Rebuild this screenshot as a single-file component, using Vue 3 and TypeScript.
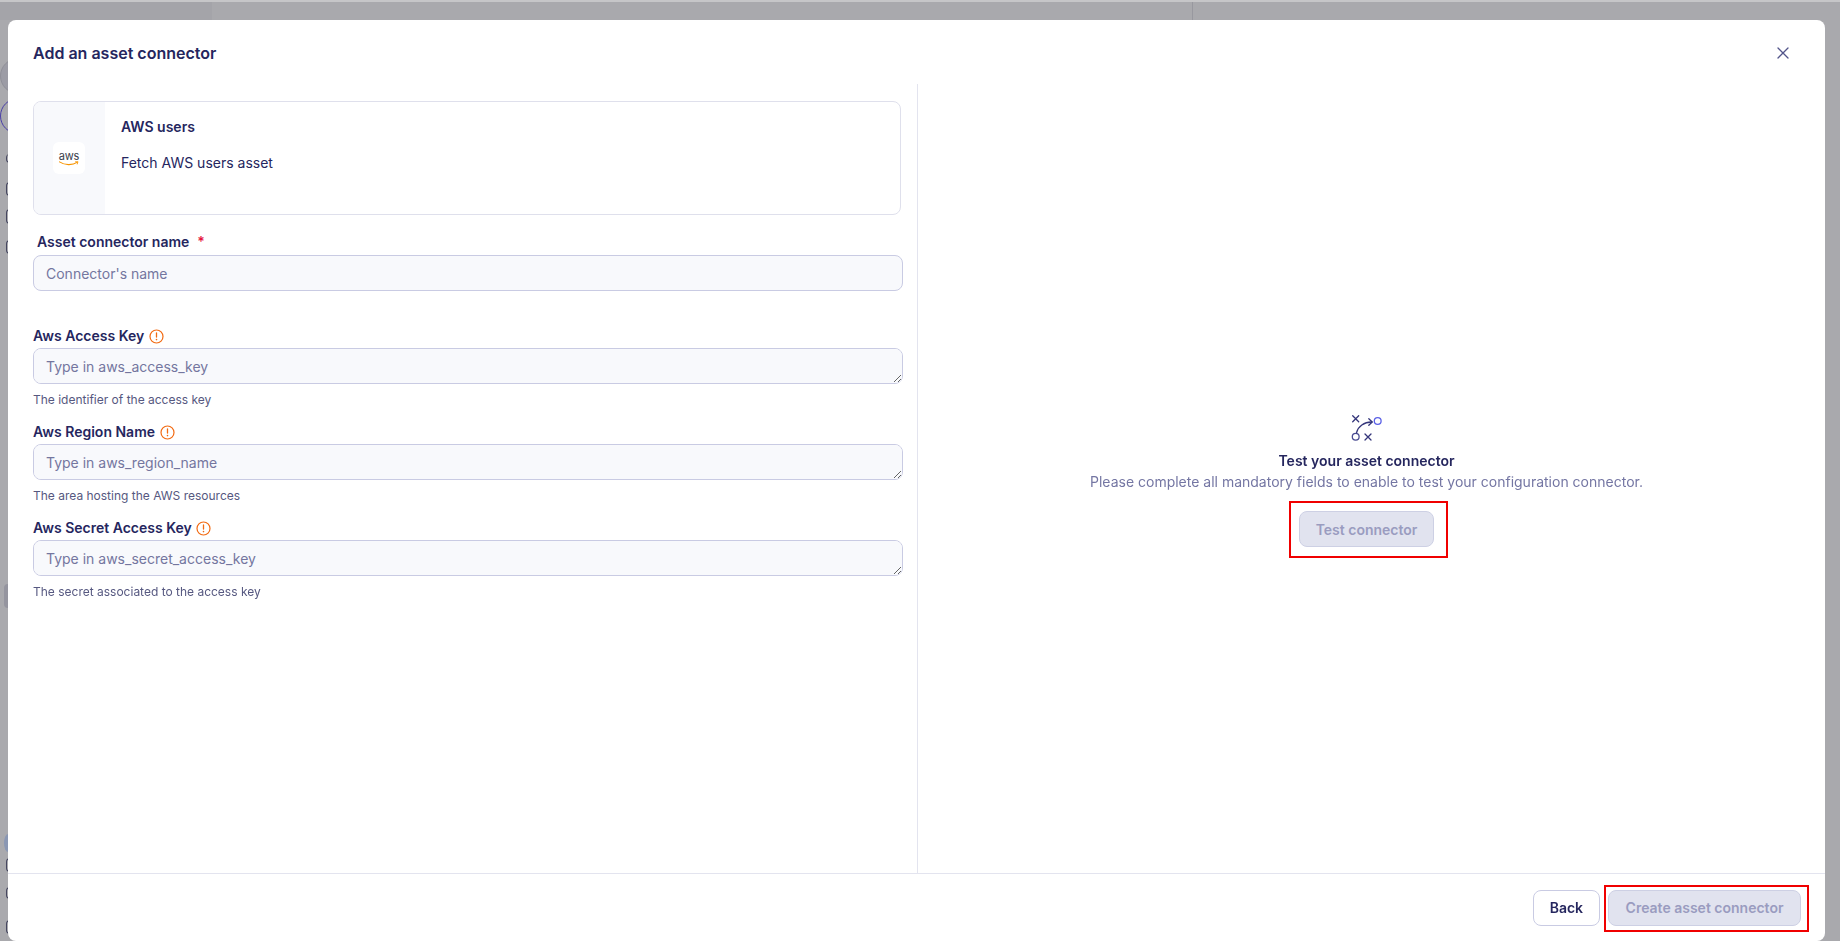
<script setup lang="ts">
interface Field {
  label: string
  placeholder: string
  help: string
}

const fields: Field[] = [
  { label: 'Aws Access Key', placeholder: 'Type in aws_access_key', help: 'The identifier of the access key' },
  { label: 'Aws Region Name', placeholder: 'Type in aws_region_name', help: 'The area hosting the AWS resources' },
  { label: 'Aws Secret Access Key', placeholder: 'Type in aws_secret_access_key', help: 'The secret associated to the access key' },
]
</script>

<template>
  <div class="page">
    <div class="backdrop" aria-hidden="true">
      <span class="bg-top-left"></span>
      <span class="bg-line"></span>
      <span class="bg-circle grey"></span>
      <span class="bg-circle purple"></span>
      <span class="bg-glyph g1"></span>
      <span class="bg-glyph g2"></span>
      <span class="bg-glyph g3"></span>
      <span class="bg-glyph g4"></span>
      <span class="bg-pill"></span>
      <span class="bg-dot"></span>
      <span class="bg-glyph g5"></span>
      <span class="bg-glyph g6"></span>
      <span class="bg-glyph g7"></span>
    </div>

    <section class="modal">
      <header class="modal-head">
        <h2 class="modal-title">Add an asset connector</h2>
        <button class="close" type="button" aria-label="Close">
          <svg width="12" height="12" viewBox="0 0 12 12" fill="none">
            <path d="M1 1l10 10M11 1L1 11" stroke="#53558a" stroke-width="1.3" stroke-linecap="round" />
          </svg>
        </button>
      </header>

      <div class="modal-body">
        <div class="form-col">
          <div class="card">
            <div class="card-logo">
              <div class="logo-box">
                <span class="aws-text">aws</span>
                <svg class="aws-smile" width="20" height="5" viewBox="0 0 21 5" fill="none">
                  <path d="M.5 .8C6 4.4 14 4.6 19 1.3" stroke="#f79400" stroke-width="1.2" stroke-linecap="round" />
                  <path d="M17.3 .7l2.6-.1-.7 2.4" stroke="#f79400" stroke-width=".9" stroke-linecap="round" />
                </svg>
              </div>
            </div>
            <div class="card-text">
              <div class="card-name">AWS users</div>
              <div class="card-desc">Fetch AWS users asset</div>
            </div>
          </div>

          <label class="name-label">Asset connector name<span class="req">*</span></label>
          <input class="input" type="text" placeholder="Connector's name" />

          <div class="fields">
            <div v-for="field in fields" :key="field.label" class="field">
              <div class="field-label">
                <span>{{ field.label }}</span>
                <svg width="15" height="15" viewBox="0 0 15 15" fill="none">
                  <circle cx="7.5" cy="7.5" r="6.5" stroke="#f26a12" stroke-width="1.2" />
                  <path d="M7.5 4v4" stroke="#f26a12" stroke-width="1.3" stroke-linecap="round" />
                  <circle cx="7.5" cy="10.6" r=".8" fill="#f26a12" />
                </svg>
              </div>
              <textarea class="input area" :placeholder="field.placeholder"></textarea>
              <div class="help">{{ field.help }}</div>
            </div>
          </div>
        </div>

        <div class="test-col">
          <svg class="test-icon" width="36" height="36" viewBox="0 0 36 36" fill="none">
            <path d="M4.7 5.7l6 6M10.7 5.7l-6 6M17 24l6 6M23 24l-6 6" stroke="#34357a" stroke-width="1.3" stroke-linecap="round" />
            <circle cx="7.7" cy="26.7" r="3.4" stroke="#4a4c92" stroke-width="1.3" />
            <circle cx="29.7" cy="11" r="3.4" stroke="#5a60e6" stroke-width="1.3" />
            <path d="M8.6 22.5C10 16.5 16 11.8 24 12" stroke="#34357a" stroke-width="1.3" stroke-linecap="round" />
            <path d="M20.8 8.8L24.2 12l-3.4 3.2" stroke="#34357a" stroke-width="1.3" stroke-linecap="round" stroke-linejoin="round" />
          </svg>
          <div class="test-title">Test your asset connector</div>
          <div class="test-sub">Please complete all mandatory fields to enable to test your configuration connector.</div>
          <div class="marked">
            <button class="btn disabled" type="button" disabled>Test connector</button>
            <span class="mark mark-test"></span>
          </div>
        </div>
      </div>

      <footer class="modal-foot">
        <button class="btn" type="button">Back</button>
        <div class="marked">
          <button class="btn disabled wide" type="button" disabled>Create asset connector</button>
          <span class="mark mark-create"></span>
        </div>
      </footer>
    </section>
  </div>
</template>

<style>
html, body { margin: 0; background: #a9a9ad; }
</style>

<style scoped>
* { box-sizing: border-box; }

.page {
  position: relative;
  width: 1840px;
  height: 941px;
  padding: 20px 15px 0 8px;
  overflow: hidden;
  background: #a9a9ad;
  font-family: Inter, "Liberation Sans", sans-serif;
  color: #25265e;
}

.backdrop { position: absolute; inset: 0; border-top: 2px solid #c6c6c8; }
.backdrop span { position: absolute; display: block; }
.bg-top-left { left: 0; top: 0; width: 212px; height: 18px; background: #a4a4a9; }
.bg-line { left: 1192px; top: 0; width: 1px; height: 18px; background: #98989f; }
.bg-circle { left: 0; width: 36px; height: 36px; border-radius: 50%; }
.bg-circle.grey { top: 56px; border: 1px solid #8f8f98; background: #9c9ca5; }
.bg-circle.purple { top: 96px; border: 1px solid #4a3fa8; }
.bg-glyph { width: 4px; border: 1.5px solid #45465f; border-right: 0; border-radius: 4px 0 0 4px; left: 6px; }
.g1 { top: 152px; height: 9px; border-width: 0 0 1.5px 1.5px !important; }
.g2 { top: 180px; height: 14px; }
.g3 { top: 207px; height: 15px; }
.g4 { top: 238px; height: 14px; }
.bg-pill { left: 4px; top: 582px; width: 8px; height: 24px; border-radius: 4px 0 0 4px; background: #95959f; }
.bg-dot { left: 4px; top: 832px; width: 8px; height: 18px; border-radius: 50% 0 0 50%; background: #8a97b3; }
.g5 { top: 856px; height: 14px; }
.g6 { top: 885px; height: 12px; }
.g7 { top: 918px; height: 14px; }

.modal {
  position: relative;
  display: flex;
  flex-direction: column;
  width: 1817px;
  height: 921px;
  border-radius: 8px;
  background: #fff;
}

.modal-head {
  flex: none;
  display: flex;
  align-items: center;
  justify-content: space-between;
  height: 64px;
  padding: 2px 36px 0 25px;
}

.modal-title {
  margin: 0;
  font-size: 16px;
  line-height: 24px;
  font-weight: 600;
  color: #25265e;
}

.close {
  display: flex;
  padding: 0;
  border: 0;
  background: none;
}

.modal-body {
  flex: 1;
  display: flex;
  min-height: 0;
}

.form-col {
  flex: none;
  width: 910px;
  padding: 17px 14px 0 25px;
  border-right: 1px solid #e3e4ef;
}

.card {
  display: flex;
  width: 868px;
  height: 114px;
  border: 1px solid #dfe0ec;
  border-radius: 8px;
  overflow: hidden;
}

.card-logo {
  flex: none;
  display: flex;
  align-items: center;
  justify-content: center;
  width: 71px;
  background: #f8f9fc;
}

.logo-box {
  display: flex;
  flex-direction: column;
  align-items: center;
  justify-content: center;
  width: 32px;
  height: 32px;
  margin-left: -1px;
  border-radius: 6px;
  background: #fff;
}

.aws-text {
  font-size: 11px;
  line-height: 10px;
  letter-spacing: -0.2px;
  color: #3a3e4c;
}

.aws-smile { display: block; }

.card-text { padding: 15px 16px; }

.card-name {
  font-size: 14px;
  line-height: 20px;
  font-weight: 600;
}

.card-desc {
  margin-top: 16px;
  font-size: 14px;
  line-height: 20px;
}

.name-label {
  display: block;
  margin: 17px 0 3px 4px;
  font-size: 14px;
  line-height: 20px;
  font-weight: 600;
}

.req {
  margin-left: 8px;
  color: #e5173f;
}

.input {
  display: block;
  width: 870px;
  height: 36px;
  padding: 7px 12px;
  border: 1px solid #c9cbe3;
  border-radius: 8px;
  outline: none;
  background: #f8f9fc;
  font-family: inherit;
  font-size: 14px;
  line-height: 20px;
  color: #25265e;
}

.input::placeholder {
  color: #74769f;
  opacity: 1;
}

.area {
  padding-top: 8px;
  resize: vertical;
}

.fields { margin-top: 35px; }

.field-label {
  display: flex;
  align-items: center;
  gap: 4.5px;
  height: 20px;
  margin-bottom: 2px;
  font-size: 14px;
  line-height: 20px;
  font-weight: 600;
}

.help {
  margin: 8px 0 14px;
  font-size: 12px;
  line-height: 16px;
  color: #565880;
}

.test-col {
  flex: 1;
  display: flex;
  flex-direction: column;
  align-items: center;
  justify-content: center;
  padding-right: 10px;
}

.test-icon { margin-left: -2px; }

.test-title {
  margin-top: 5px;
  font-size: 14px;
  line-height: 20px;
  font-weight: 600;
}

.test-sub {
  margin-top: 1px;
  font-size: 14px;
  line-height: 20px;
  color: #7476a3;
}

.test-sub + .marked { margin-top: 19px; }

.modal-foot {
  flex: none;
  display: flex;
  align-items: center;
  justify-content: flex-end;
  gap: 8px;
  height: 68px;
  padding-right: 24px;
  border-top: 1px solid #e3e4ef;
}

.btn {
  height: 36px;
  padding: 0 16px;
  border: 1px solid #c9cbe3;
  border-radius: 8px;
  background: #fff;
  font-family: inherit;
  font-size: 14px;
  font-weight: 600;
  color: #25265e;
}

.btn.wide { padding: 0 16.5px; }

.btn.disabled {
  background: #e1e3ef;
  border-color: #cdd0e4;
  color: #9a9cc0;
}

.marked { position: relative; display: flex; }

.mark {
  position: absolute;
  border: 2px solid #f00000;
  pointer-events: none;
}

.mark-test { inset: -10px -14px -11px -10px; }
.mark-create { inset: -5px -8px -6px -4px; }
</style>
